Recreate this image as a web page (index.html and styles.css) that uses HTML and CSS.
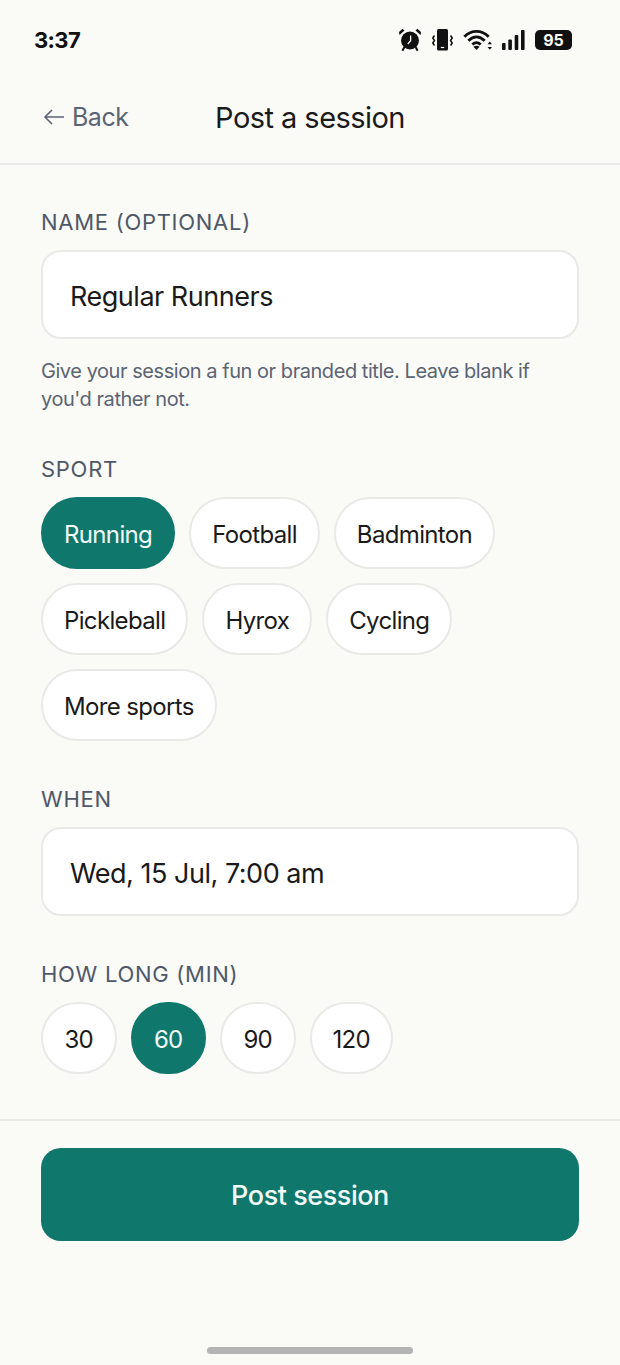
FILE: index.html
```html
<!DOCTYPE html>
<html lang="en">
<head>
    <meta charset="UTF-8">
    <meta name="viewport" content="width=device-width, initial-scale=1.0">
    <title>Post a session</title>
    <link rel="stylesheet" href="styles.css">
</head>
<body>
    <div class="screen">
        <!-- Status bar -->
        <div class="status-bar">
            <span class="time">3:37</span>
            <div class="status-icons">
                <svg class="wide-gap" width="24" height="24" viewBox="0 0 24 24">
                    <path d="M1.500 7 6.500 2.400 4.600.8 1 4Z M22.500 7 17.500 2.400 19.400.8 23 4Z" fill="#111"/>
                    <circle cx="12" cy="12.500" r="9" fill="#111"/>
                    <path d="M12.600 7.500V12.800L9.800 16" fill="none" stroke="#fafaf7" stroke-width="1.300"/>
                    <path d="M6.400 19 4.400 22.800M17.600 19l2 3.800" stroke="#111" stroke-width="2"/>
                </svg>
                <svg class="wide-gap" width="21" height="24" viewBox="0 0 21 24">
                    <rect x="5" y="1" width="11" height="21.500" rx="1.500" fill="#111"/>
                    <path d="M8.800 19.500h3.400" stroke="#fafaf7" stroke-width="1.200"/>
                    <path d="M2.500 7.500.8 10l1.700 2.500L.8 15l1.700 2.500M18.500 7.500l1.700 2.500-1.700 2.500 1.700 2.500-1.700 2.500" fill="none" stroke="#111" stroke-width="1.500"/>
                </svg>
                <svg width="30" height="22" viewBox="0 0 30 22">
                    <path d="M1.300 7.800C8.500.6 18.500.6 25.700 7.800" fill="none" stroke="#111" stroke-width="2.800"/>
                    <path d="M5.300 11.800C10.500 6.600 16.500 6.600 21.700 11.800" fill="none" stroke="#111" stroke-width="2.800"/>
                    <path d="M9.300 15.600C12 12.900 15 12.900 17.700 15.600" fill="none" stroke="#111" stroke-width="2.800"/>
                    <path d="M13.500 21 10.400 17.800C12.400 16.300 14.600 16.300 16.600 17.800Z" fill="#111"/>
                    <path d="M26.800 12.500 24.600 15.200H29ZM26.800 20.800 24.600 18.100H29Z" fill="#111"/>
                </svg>
                <svg class="wide-gap" width="24" height="22" viewBox="0 0 24 22">
                    <rect x="1" y="14" width="3.600" height="7" rx="1" fill="#111"/>
                    <rect x="7.300" y="10.500" width="3.600" height="10.500" rx="1" fill="#111"/>
                    <rect x="13.700" y="6" width="3.600" height="15" rx="1" fill="#111"/>
                    <rect x="20" y="1" width="3.600" height="20" rx="1" fill="#111"/>
                </svg>
                <span class="battery">95</span>
            </div>
        </div>

        <!-- Header -->
        <header class="top-bar">
            <span class="back">
                <svg width="22" height="18" viewBox="0 0 22 18">
                    <path d="M21 9H2M9 2 2 9l7 7" fill="none" stroke="#5b6472" stroke-width="1.600"/>
                </svg>
                Back
            </span>
            <h1>Post a session</h1>
        </header>

        <main class="form">
            <div class="field field-name">
                <div class="label">NAME (OPTIONAL)</div>
                <div class="input">Regular Runners</div>
                <p class="hint">Give your session a fun or branded title. Leave blank if you'd rather not.</p>
            </div>

            <div class="field field-sport">
                <div class="label">SPORT</div>
                <div class="chips">
                    <span class="chip selected">Running</span>
                    <span class="chip">Football</span>
                    <span class="chip">Badminton</span>
                    <span class="chip">Pickleball</span>
                    <span class="chip">Hyrox</span>
                    <span class="chip">Cycling</span>
                    <span class="chip">More sports</span>
                </div>
            </div>

            <div class="field field-when">
                <div class="label">WHEN</div>
                <div class="input">Wed, 15 Jul, 7:00 am</div>
            </div>

            <div class="field field-long">
                <div class="label">HOW LONG (MIN)</div>
                <div class="chips">
                    <span class="chip num">30</span>
                    <span class="chip num selected">60</span>
                    <span class="chip num">90</span>
                    <span class="chip num">120</span>
                </div>
            </div>
        </main>

        <footer class="bottom">
            <button class="post-btn">Post session</button>
        </footer>

        <div class="home-bar"></div>
    </div>
</body>
</html>
```

FILE: styles.css
```css
* {
    box-sizing: border-box;
}
body {
    margin: 0;
    background-color: #fafaf7;
    font-family: "Inter", "Liberation Sans", sans-serif;
    color: #1a1a1a;
}
.screen {
    width: 620px;
    height: 1365px;
    display: flex;
    flex-direction: column;
    overflow: hidden;
}
.status-bar {
    height: 80px;
    padding: 0 48px 0 34px;
    display: flex;
    align-items: center;
    justify-content: space-between;
}
.time {
    font-size: 22px;
    font-weight: 700;
    letter-spacing: -0.6px;
    color: #111;
}
.status-icons {
    display: flex;
    align-items: center;
    gap: 8px;
}
.wide-gap {
    margin-right: 2px;
}
.battery {
    width: 37px;
    height: 20px;
    border-radius: 5px;
    background: #111;
    color: #fafaf7;
    font-size: 16px;
    font-weight: 700;
    line-height: 20px;
    text-align: center;
}
.top-bar {
    position: relative;
    height: 85px;
    padding-bottom: 8px;
    border-bottom: 2px solid #e9e9e7;
    display: flex;
    align-items: center;
    justify-content: center;
}
.back {
    position: absolute;
    left: 43px;
    top: 22px;
    display: flex;
    align-items: center;
    gap: 7px;
    font-size: 25px;
    font-weight: 400;
    letter-spacing: -0.5px;
    color: #5b6472;
}
h1 {
    margin: 0;
    font-size: 29px;
    font-weight: 430;
    letter-spacing: -0.55px;
    color: #1a1a1a;
}
.form {
    padding: 0 41px;
    height: 954px;
}
.label {
    font-size: 22px;
    font-weight: 430;
    line-height: 28px;
    letter-spacing: 0.72px;
    color: #4f5868;
}
.field-name {
    padding-top: 43px;
}
.field-name .label {
    margin-bottom: 14px;
}
.input {
    height: 89px;
    padding: 0 27px;
    background: #fff;
    border: 2px solid #e9e9e7;
    border-radius: 20px;
    font-size: 27px;
    font-weight: 400;
    line-height: 90px;
    letter-spacing: -0.48px;
}
.hint {
    margin: 18px 30px 0 0;
    font-size: 20px;
    font-weight: 400;
    line-height: 28px;
    letter-spacing: -0.45px;
    color: #5b6472;
}
.field-sport {
    margin-top: 42px;
}
.field-sport .label {
    margin-bottom: 14px;
}
.chips {
    display: flex;
    flex-wrap: wrap;
    gap: 14px;
}
.chip {
    height: 72px;
    padding: 0 21px;
    background: #fff;
    border: 2px solid #e9e9e7;
    border-radius: 36px;
    font-size: 24px;
    font-weight: 400;
    line-height: 71px;
    letter-spacing: -0.65px;
}
.chip.selected {
    background: #10776c;
    border-color: #10776c;
    color: #f2fbf9;
}
.chip.num {
    min-width: 75.5px;
    text-align: center;
}
.field-when {
    margin-top: 44px;
}
.field-when .label {
    margin-bottom: 14px;
}
.field-long {
    margin-top: 44px;
}
.field-long .label {
    margin-bottom: 14px;
}
.bottom {
    border-top: 2px solid #e9e9e7;
    padding: 27px 41px 0;
    height: 228px;
}
.post-btn {
    display: block;
    width: 100%;
    height: 93px;
    padding-top: 3px;
    border: none;
    border-radius: 20px;
    background: #10776c;
    color: #f2fbf9;
    font-family: inherit;
    font-size: 27px;
    font-weight: 450;
    letter-spacing: -0.45px;
}
.home-bar {
    width: 206px;
    height: 7px;
    margin: 0 auto;
    border-radius: 4px;
    background: #b4b4b4;
}
```
